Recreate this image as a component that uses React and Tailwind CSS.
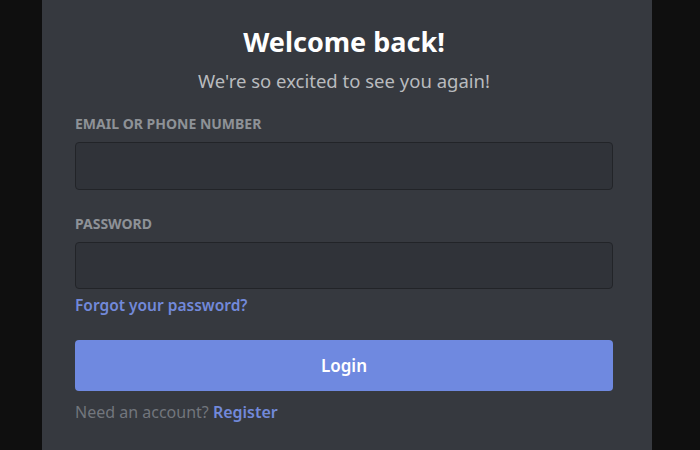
export default function App() {
  return (
    <div className="flex h-[450px] w-[700px] overflow-hidden bg-[#0f0f0f] pl-[42px] font-['Noto_Sans',sans-serif]">
      <div className="w-[610px] bg-[#36393f] pl-[33px] pr-[39px] pt-[22px]">
        <h1 className="text-center text-[27px] font-bold leading-[40px] text-white">Welcome back!</h1>
        <p className="mt-[6px] text-center text-[18.5px] leading-[26px] text-[#b9bbbe]">We're so excited to see you again!</p>

        <form onSubmit={(e) => e.preventDefault()}>
          <div className="mt-[21px]">
            <label htmlFor="email" className="block text-[14px] font-bold leading-[18px] text-[#8e9297]">
              EMAIL OR PHONE NUMBER
            </label>
            <input
              id="email"
              type="text"
              className="mt-[9px] block h-[48px] w-full rounded-[4px] border border-[#222428] bg-[#303339] px-3 text-white outline-none"
            />
          </div>

          <div className="mt-[25px]">
            <label htmlFor="password" className="block text-[14px] font-bold leading-[18px] text-[#8e9297]">
              PASSWORD
            </label>
            <input
              id="password"
              type="password"
              className="mt-[9px] block h-[47px] w-full rounded-[4px] border border-[#222428] bg-[#303339] px-3 text-white outline-none"
            />
          </div>

          <a href="#" className="mt-[5px] block text-[15.5px] font-semibold leading-[22px] text-[#7289da]">
            Forgot your password?
          </a>

          <button className="mt-[24px] block h-[51px] w-full rounded-[4px] bg-[#6f89e0] text-[17px] font-semibold text-white">
            Login
          </button>

          <p className="mt-[10px] text-[16px] leading-[22px] text-[#72767d]">
            Need an account? <a href="#" className="font-semibold text-[#7289da]">Register</a>
          </p>
        </form>
      </div>
    </div>
  );
}
